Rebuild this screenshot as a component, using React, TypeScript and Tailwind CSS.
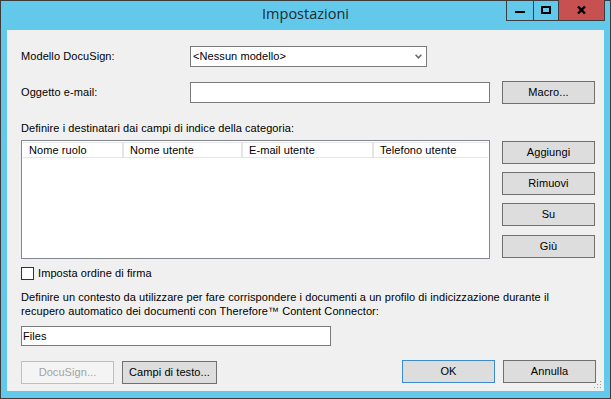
import React from "react";

const ui = "font-['Liberation_Sans',Arial,sans-serif] text-[11px] text-black";

function Btn({
  children,
  width = "w-[93px]",
  primary = false,
  disabled = false,
}: {
  children: React.ReactNode;
  width?: string;
  primary?: boolean;
  disabled?: boolean;
}) {
  const tone = disabled
    ? "border-[#bfbfbf] bg-[#f4f4f4] text-[#a3a3a3]"
    : primary
      ? "border-[#3c8ccc] bg-[#dddddd]"
      : "border-[#707070] bg-[#dddddd]";
  return (
    <button
      type="button"
      className={`flex h-[23px] ${width} shrink-0 items-center justify-center border pb-px leading-none ${tone}`}
    >
      {children}
    </button>
  );
}

function Field({ width, children }: { width: string; children?: React.ReactNode }) {
  return (
    <div className={`flex h-[20px] ${width} items-center border border-[#7a7a7a] bg-white pl-px leading-none`}>
      {children}
    </div>
  );
}

export default function App() {
  return (
    <div className={`relative flex h-[399px] w-[611px] flex-col border border-[#3c3c3c] bg-[#63c9ea] ${ui}`}>
      {/* Title bar */}
      <div className="flex h-[29px] shrink-0 items-center justify-center pb-[2px]">
        <span className="font-['Open_Sans',sans-serif] text-[14.5px] leading-none text-[#1f2a30]">Impostazioni</span>
      </div>

      {/* Window controls */}
      <div className="absolute -top-px right-[5px] flex h-[21px] border-x border-b border-[#3c3c3c]">
        <div className="flex w-[27px] items-center justify-center border-r border-[#3c3c3c] pt-[3px]">
          <div className="h-[2px] w-[10px] bg-black" />
        </div>
        <div className="flex w-[25px] items-center justify-center border-r border-[#3c3c3c]">
          <div className="h-[8px] w-[10px] border-2 border-black" />
        </div>
        <div className="flex w-[45px] items-center justify-center bg-[#c75050]">
          <svg width="9" height="8" viewBox="0 0 9 8">
            <path d="M1 0.5 L8 7.5 M8 0.5 L1 7.5" stroke="#000" strokeWidth="2.4" />
          </svg>
        </div>
      </div>

      {/* Client area */}
      <div className="relative mx-[6px] mb-[7px] flex flex-1 flex-col bg-[#f0f0f0] pl-[14px] pr-[8px] pt-[16px] tracking-[0.08px]">
        <div className="flex h-[21px] items-center">
          <span className="w-[169px]">Modello DocuSign:</span>
          <div className="flex h-[21px] w-[237px] items-center justify-between border border-[#7a7a7a] bg-white pl-[2px] pr-[4px] leading-none">
            <span>&lt;Nessun modello&gt;</span>
            <svg width="7" height="5" viewBox="0 0 7 5">
              <path d="M0.6 0.8 L3.5 3.8 L6.4 0.8" fill="none" stroke="#6d6d6d" strokeWidth="1.6" />
            </svg>
          </div>
        </div>

        <div className="mt-[14px] flex h-[23px] items-center">
          <span className="w-[169px]">Oggetto e-mail:</span>
          <div className="h-[21px] w-[300px] border border-[#7a7a7a] bg-white" />
          <div className="ml-[12px]">
            <Btn>Macro...</Btn>
          </div>
        </div>

        <div className="mt-[18px] leading-[13px]">Definire i destinatari dai campi di indice della categoria:</div>

        <div className="mt-[5px] flex">
          <div className="h-[119px] w-[469px] border border-[#828790] bg-white px-px pt-[1px]">
            <div className="flex h-[16px] border-y border-[#e5e5e5] leading-none">
              <div className="flex w-[101px] items-center border-r-2 border-[#e5e5e5] pl-[6px]">Nome ruolo</div>
              <div className="flex w-[119px] items-center border-r-2 border-[#e5e5e5] pl-[6px]">Nome utente</div>
              <div className="flex w-[131px] items-center border-r-2 border-[#e5e5e5] pl-[6px]">E-mail utente</div>
              <div className="flex flex-1 items-center pl-[6px]">Telefono utente</div>
            </div>
          </div>
          <div className="ml-[12px] mt-px flex flex-col gap-[8px]">
            <Btn>Aggiungi</Btn>
            <Btn>Rimuovi</Btn>
            <Btn>Su</Btn>
            <div className="mt-px">
              <Btn>Giù</Btn>
            </div>
          </div>
        </div>

        <div className="mt-[8px] flex items-center gap-[4px]">
          <div className="h-[13px] w-[13px] border border-[#333333] bg-white" />
          <span className="leading-none">Imposta ordine di firma</span>
        </div>

        <div className="mt-[11px] leading-[13.5px]">
          Definire un contesto da utilizzare per fare corrispondere i documenti a un profilo di indicizzazione durante il
          <br />
          recupero automatico dei documenti con Therefore™ Content Connector:
        </div>

        <div className="mt-[8px]">
          <Field width="w-[310px]">Files</Field>
        </div>

        <div className="mt-[15px] flex items-start justify-between">
          <div className="flex gap-[8px]">
            <Btn disabled>DocuSign...</Btn>
            <Btn width="w-[95px]">Campi di testo...</Btn>
          </div>
          <div className="-mt-px flex gap-[8px]">
            <Btn primary>OK</Btn>
            <Btn>Annulla</Btn>
          </div>
        </div>

        {/* Size grip */}
        <svg className="absolute bottom-[2px] right-[2px]" width="10" height="10" viewBox="0 0 10 10">
          {[
            [8, 2],
            [5, 5],
            [8, 5],
            [2, 8],
            [5, 8],
            [8, 8],
          ].map(([x, y]) => (
            <rect key={`${x}-${y}`} x={x} y={y} width="1" height="1" fill="#a0a0a0" />
          ))}
        </svg>
      </div>
    </div>
  );
}
